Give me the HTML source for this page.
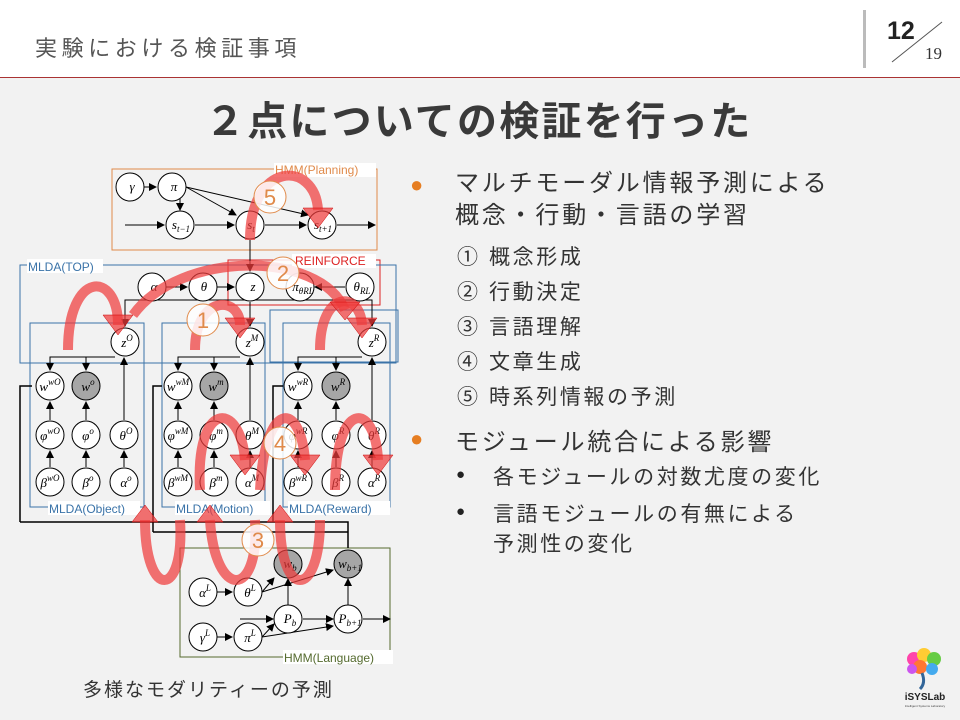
<!DOCTYPE html>
<html><head><meta charset="utf-8"><style>
body{margin:0;width:960px;height:720px;overflow:hidden;background:#f2f2f2;font-family:"Liberation Sans","Noto Sans CJK JP",sans-serif;position:relative}
.hdr{position:absolute;left:0;top:0;width:960px;height:77px;background:#fff;border-bottom:1px solid #a33}
.t{position:absolute;white-space:nowrap;color:#333}
.s{position:absolute;white-space:nowrap;color:#333;font-size:21px;letter-spacing:2.6px}
</style></head><body>
<div class="hdr"></div>
<div class="t" style="left:35px;top:31px;font-size:22px;letter-spacing:4.6px;color:#555">実験における検証事項</div>
<div style="position:absolute;left:863px;top:10px;width:3px;height:58px;background:#bbb"></div>
<div class="t" style="left:887px;top:17px;font-size:25px;font-weight:bold;color:#222">12</div>
<svg style="position:absolute;left:890px;top:20px" width="60" height="50"><line x1="2" y1="42" x2="52" y2="2" stroke="#555" stroke-width="1"/></svg>
<div class="t" style="left:925px;top:44px;font-size:17px;font-family:'Liberation Serif',serif;color:#333">19</div>
<div class="t" style="left:205px;top:89px;font-size:40px;letter-spacing:2.2px;font-weight:bold;color:#3a3a3a">２点についての検証を行った</div>

<div class="t" style="left:410px;top:172px;font-size:22px;color:#e67e22">●</div>
<div class="t" style="left:455px;top:168px;font-size:24px;letter-spacing:2.8px;line-height:32px;color:#333">マルチモーダル情報予測による<br>概念・行動・言語の学習</div>
<div class="s" style="left:457px;top:241px">①&nbsp;概念形成</div>
<div class="s" style="left:457px;top:276px">②&nbsp;行動決定</div>
<div class="s" style="left:457px;top:311px">③&nbsp;言語理解</div>
<div class="s" style="left:457px;top:346px">④&nbsp;文章生成</div>
<div class="s" style="left:457px;top:381px">⑤&nbsp;時系列情報の予測</div>
<div class="t" style="left:410px;top:426px;font-size:22px;color:#e67e22">●</div>
<div class="t" style="left:455px;top:422px;font-size:24px;letter-spacing:2.8px;color:#333">モジュール統合による影響</div>
<div class="t" style="left:456px;top:466px;font-size:15px;color:#222">●</div>
<div class="s" style="left:493px;top:461px">各モジュールの対数尤度の変化</div>
<div class="t" style="left:456px;top:503px;font-size:15px;color:#222">●</div>
<div class="s" style="left:493px;top:498px">言語モジュールの有無による</div>
<div class="s" style="left:493px;top:528px">予測性の変化</div>

<div class="t" style="left:83px;top:675px;font-size:19px;letter-spacing:2px;color:#333">多様なモダリティーの予測</div>

<svg style="position:absolute;left:900px;top:645px" width="50" height="65">
<circle cx="14" cy="14" r="7" fill="#f4a"/><circle cx="24" cy="10" r="7" fill="#fc3"/><circle cx="34" cy="14" r="7" fill="#6c4"/><circle cx="20" cy="22" r="7" fill="#f73"/><circle cx="32" cy="24" r="6" fill="#4ae"/><circle cx="12" cy="24" r="5" fill="#c5e"/>
<path d="M22 28 q4 10 -2 16" stroke="#369" stroke-width="3" fill="none"/>
<text x="25" y="55" font-size="10" font-weight="bold" text-anchor="middle" fill="#222" font-family="Liberation Sans">iSYSLab</text>
<text x="25" y="62" font-size="3" text-anchor="middle" fill="#444">Intelligent Systems Laboratory</text>
</svg>

<svg style="position:absolute;left:0;top:0" width="400" height="720" font-family="Liberation Serif" font-style="italic">
<defs><marker id="a" markerWidth="8" markerHeight="8" refX="7" refY="4" orient="auto"><path d="M0,0 L8,4 L0,8z" fill="#000"/></marker></defs>
<g fill="none" stroke-width="1">
<rect x="112" y="169" width="265" height="81" stroke="#e08a4a"/>
<rect x="228" y="260" width="152" height="45" stroke="#d22"/>
<rect x="20" y="265" width="376" height="98" stroke="#3a73a8"/>
<rect x="270" y="310" width="128" height="52" stroke="#3a73a8"/>
<rect x="30" y="323" width="114" height="184" stroke="#3a73a8"/>
<rect x="162" y="323" width="103" height="184" stroke="#3a73a8"/>
<rect x="283" y="323" width="107" height="184" stroke="#3a73a8"/>
<rect x="180" y="548" width="210" height="109" stroke="#556b2f"/>
<path d="M20 522 V386 H32 M20 522 H348 V548 M153 532 V386 H162 M153 532 H348 M273 522 V386 H283" stroke="#000" stroke-width="1.5"/>
</g>
<g stroke="#000" stroke-width="1" marker-end="url(#a)">
<line x1="144" y1="187" x2="156" y2="187"/><line x1="186" y1="187" x2="236" y2="215"/><line x1="186" y1="187" x2="308" y2="215"/><line x1="180" y1="198" x2="180" y2="210"/>
<line x1="125" y1="225" x2="164" y2="225"/><line x1="195" y1="225" x2="234" y2="225"/><line x1="265" y1="225" x2="306" y2="225"/><line x1="337" y1="225" x2="375" y2="225"/>
<line x1="166" y1="287" x2="187" y2="287"/><line x1="217" y1="287" x2="234" y2="287"/><line x1="250" y1="240" x2="250" y2="271"/><line x1="345" y1="287" x2="315" y2="287"/>
<line x1="250" y1="302" x2="250" y2="326"/><path d="M250 300 H125 V326" fill="none"/><path d="M250 300 H372 V326" fill="none"/>
<path d="M115 357 H50 V370" fill="none"/><line x1="86" y1="357" x2="86" y2="370"/>
<path d="M240 357 H178 V370" fill="none"/><line x1="214" y1="357" x2="214" y2="370"/>
<path d="M362 357 H298 V370" fill="none"/><line x1="336" y1="357" x2="336" y2="370"/>
<line x1="288" y1="606" x2="288" y2="579"/><line x1="348" y1="606" x2="348" y2="579"/><line x1="262" y1="592" x2="274" y2="578"/><line x1="262" y1="592" x2="333" y2="570"/>
<line x1="217" y1="592" x2="232" y2="592"/><line x1="217" y1="637" x2="232" y2="637"/><line x1="262" y1="637" x2="274" y2="624"/><line x1="262" y1="637" x2="333" y2="626"/>
<line x1="240" y1="619" x2="273" y2="619"/><line x1="303" y1="619" x2="333" y2="619"/><line x1="363" y1="619" x2="390" y2="619"/>
</g>
<g stroke="#000" stroke-width="1" marker-end="url(#a)">
<line x1="50" y1="467" x2="50" y2="451"/><line x1="86" y1="467" x2="86" y2="451"/><line x1="124" y1="467" x2="124" y2="451"/>
<line x1="50" y1="420" x2="50" y2="402"/><line x1="86" y1="420" x2="86" y2="402"/><line x1="124" y1="420" x2="124" y2="358"/>
<line x1="178" y1="467" x2="178" y2="451"/><line x1="214" y1="467" x2="214" y2="451"/><line x1="250" y1="467" x2="250" y2="451"/>
<line x1="178" y1="420" x2="178" y2="402"/><line x1="214" y1="420" x2="214" y2="402"/><line x1="250" y1="420" x2="250" y2="358"/>
<line x1="298" y1="467" x2="298" y2="451"/><line x1="336" y1="467" x2="336" y2="451"/><line x1="372" y1="467" x2="372" y2="451"/>
<line x1="298" y1="420" x2="298" y2="402"/><line x1="336" y1="420" x2="336" y2="402"/><line x1="372" y1="420" x2="372" y2="358"/>
</g>
<g stroke="#000" fill="#fff">
<circle cx="130" cy="187" r="14"/><circle cx="172" cy="187" r="14"/><circle cx="180" cy="225" r="14"/><circle cx="250" cy="225" r="14"/><circle cx="322" cy="225" r="14"/>
<circle cx="152" cy="287" r="14"/><circle cx="203" cy="287" r="14"/><circle cx="250" cy="287" r="14"/><circle cx="300" cy="287" r="14"/><circle cx="360" cy="287" r="14"/>
<circle cx="125" cy="342" r="14"/><circle cx="250" cy="342" r="14"/><circle cx="372" cy="342" r="14"/>
<circle cx="50" cy="386" r="14"/><circle cx="86" cy="386" r="14" fill="#a6a6a6"/><circle cx="178" cy="386" r="14"/><circle cx="214" cy="386" r="14" fill="#a6a6a6"/><circle cx="298" cy="386" r="14"/><circle cx="336" cy="386" r="14" fill="#a6a6a6"/>
<circle cx="50" cy="435" r="14"/><circle cx="86" cy="435" r="14"/><circle cx="124" cy="435" r="14"/><circle cx="178" cy="435" r="14"/><circle cx="214" cy="435" r="14"/><circle cx="250" cy="435" r="14"/><circle cx="298" cy="435" r="14"/><circle cx="336" cy="435" r="14"/><circle cx="372" cy="435" r="14"/>
<circle cx="50" cy="482" r="14"/><circle cx="86" cy="482" r="14"/><circle cx="124" cy="482" r="14"/><circle cx="178" cy="482" r="14"/><circle cx="214" cy="482" r="14"/><circle cx="250" cy="482" r="14"/><circle cx="298" cy="482" r="14"/><circle cx="336" cy="482" r="14"/><circle cx="372" cy="482" r="14"/>
<circle cx="288" cy="564" r="14" fill="#a6a6a6"/><circle cx="348" cy="564" r="14" fill="#a6a6a6"/><circle cx="203" cy="592" r="14"/><circle cx="248" cy="592" r="14"/><circle cx="288" cy="619" r="14"/><circle cx="348" cy="619" r="14"/><circle cx="203" cy="637" r="14"/><circle cx="248" cy="637" r="14"/>
</g>
<g font-size="13" fill="#000" stroke="none" text-anchor="middle">
<text x="132" y="191">γ</text><text x="174" y="191">π</text><text x="181" y="229">s<tspan font-size="9" dy="3">t−1</tspan></text><text x="251" y="229">s<tspan font-size="9" dy="3">t</tspan></text><text x="323" y="229">s<tspan font-size="9" dy="3">t+1</tspan></text>
<text x="154" y="291">α</text><text x="204" y="291">θ</text><text x="253" y="291">z</text><text x="303" y="291">π<tspan font-size="9" dy="3">θRL</tspan></text><text x="362" y="291">θ<tspan font-size="9" dy="3">RL</tspan></text>
<text x="127" y="347">z<tspan font-size="9" dy="-6">O</tspan></text><text x="252" y="347">z<tspan font-size="9" dy="-6">M</tspan></text><text x="374" y="347">z<tspan font-size="9" dy="-6">R</tspan></text>
<text x="50" y="391">w<tspan font-size="9" dy="-6">wO</tspan></text><text x="88" y="391">w<tspan font-size="9" dy="-6">o</tspan></text><text x="178" y="391">w<tspan font-size="9" dy="-6">wM</tspan></text><text x="216" y="391">w<tspan font-size="9" dy="-6">m</tspan></text><text x="298" y="391">w<tspan font-size="9" dy="-6">wR</tspan></text><text x="338" y="391">w<tspan font-size="9" dy="-6">R</tspan></text>
<text x="50" y="440">φ<tspan font-size="9" dy="-6">wO</tspan></text><text x="88" y="440">φ<tspan font-size="9" dy="-6">o</tspan></text><text x="126" y="440">θ<tspan font-size="9" dy="-6">O</tspan></text><text x="178" y="440">φ<tspan font-size="9" dy="-6">wM</tspan></text><text x="216" y="440">φ<tspan font-size="9" dy="-6">m</tspan></text><text x="252" y="440">θ<tspan font-size="9" dy="-6">M</tspan></text><text x="298" y="440">φ<tspan font-size="9" dy="-6">wR</tspan></text><text x="338" y="440">φ<tspan font-size="9" dy="-6">R</tspan></text><text x="374" y="440">θ<tspan font-size="9" dy="-6">R</tspan></text>
<text x="50" y="487">β<tspan font-size="9" dy="-6">wO</tspan></text><text x="88" y="487">β<tspan font-size="9" dy="-6">o</tspan></text><text x="126" y="487">α<tspan font-size="9" dy="-6">o</tspan></text><text x="178" y="487">β<tspan font-size="9" dy="-6">wM</tspan></text><text x="216" y="487">β<tspan font-size="9" dy="-6">m</tspan></text><text x="252" y="487">α<tspan font-size="9" dy="-6">M</tspan></text><text x="298" y="487">β<tspan font-size="9" dy="-6">wR</tspan></text><text x="338" y="487">β<tspan font-size="9" dy="-6">R</tspan></text><text x="374" y="487">α<tspan font-size="9" dy="-6">R</tspan></text>
<text x="290" y="568">w<tspan font-size="9" dy="3">b</tspan></text><text x="350" y="568">w<tspan font-size="9" dy="3">b+1</tspan></text><text x="205" y="597">α<tspan font-size="9" dy="-6">L</tspan></text><text x="250" y="597">θ<tspan font-size="9" dy="-6">L</tspan></text><text x="290" y="623">P<tspan font-size="9" dy="3">b</tspan></text><text x="350" y="623">P<tspan font-size="9" dy="3">b+1</tspan></text><text x="205" y="642">γ<tspan font-size="9" dy="-6">L</tspan></text><text x="250" y="642">π<tspan font-size="9" dy="-6">L</tspan></text>
</g>
<g font-family="Liberation Sans" font-style="normal" font-size="12">
<rect x="274" y="163" width="102" height="14" fill="#fff"/><text x="275" y="174" fill="#e08a4a">HMM(Planning)</text>
<rect x="292" y="254" width="84" height="14" fill="#fff"/><text x="295" y="265" fill="#d22">REINFORCE</text>
<rect x="27" y="259" width="76" height="14" fill="#fff"/><text x="28" y="271" fill="#3a73a8">MLDA(TOP)</text>
<rect x="48" y="501" width="92" height="14" fill="#fff"/><text x="49" y="513" fill="#3a73a8">MLDA(Object)</text>
<rect x="175" y="501" width="95" height="14" fill="#fff"/><text x="176" y="513" fill="#3a73a8">MLDA(Motion)</text>
<rect x="288" y="501" width="102" height="14" fill="#fff"/><text x="289" y="513" fill="#3a73a8">MLDA(Reward)</text>
<rect x="283" y="650" width="110" height="14" fill="#fff"/><text x="284" y="662" fill="#556b2f">HMM(Language)</text>
</g>
<g fill="none" stroke="#ee3b3b" stroke-opacity="0.72" stroke-width="10">
<path d="M68 350 C68 270 118 270 118 325"/>
<path d="M195 350 C195 295 240 295 240 325"/>
<path d="M320 350 C320 290 360 290 362 325"/>
<path d="M133 315 C180 250 320 250 345 310"/>
<path d="M250 240 C250 160 315 160 318 210"/>
<path d="M145 520 C145 600 185 600 180 520"/><path d="M210 520 C215 600 260 600 255 520"/><path d="M280 520 C280 600 320 600 320 520"/>
<path d="M200 490 C195 400 240 400 245 460"/><path d="M260 490 C265 400 300 400 305 460"/><path d="M335 490 C335 400 375 400 378 460"/>
</g>
<g fill="#ee3b3b" fill-opacity="0.72" stroke="#c00" stroke-width="0.5">
<path d="M103 315 L133 315 L118 335z"/><path d="M225 318 L255 318 L240 338z"/><path d="M347 318 L377 318 L362 338z"/><path d="M330 302 L360 302 L345 320z"/><path d="M303 208 L333 208 L318 228z"/>
<path d="M132 522 L158 522 L145 505z"/><path d="M197 522 L223 522 L210 505z"/><path d="M267 522 L293 522 L280 505z"/>
<path d="M230 455 L260 455 L245 475z"/><path d="M290 455 L320 455 L305 475z"/><path d="M363 455 L393 455 L378 475z"/>
</g>
<g font-family="Liberation Sans" font-style="normal" font-size="22" fill="#e08a4a" text-anchor="middle">
<circle cx="270" cy="197" r="16" fill="#fff" fill-opacity="0.85" stroke="#e08a4a"/><text x="270" y="205">5</text>
<circle cx="283" cy="273" r="16" fill="#fff" fill-opacity="0.85" stroke="#e08a4a"/><text x="283" y="281">2</text>
<circle cx="203" cy="320" r="16" fill="#fff" fill-opacity="0.85" stroke="#e08a4a"/><text x="203" y="328">1</text>
<circle cx="280" cy="443" r="16" fill="#fff" fill-opacity="0.85" stroke="#e08a4a"/><text x="280" y="451">4</text>
<circle cx="258" cy="540" r="16" fill="#fff" fill-opacity="0.85" stroke="#e08a4a"/><text x="258" y="548">3</text>
</g>
</svg>
</body></html>
